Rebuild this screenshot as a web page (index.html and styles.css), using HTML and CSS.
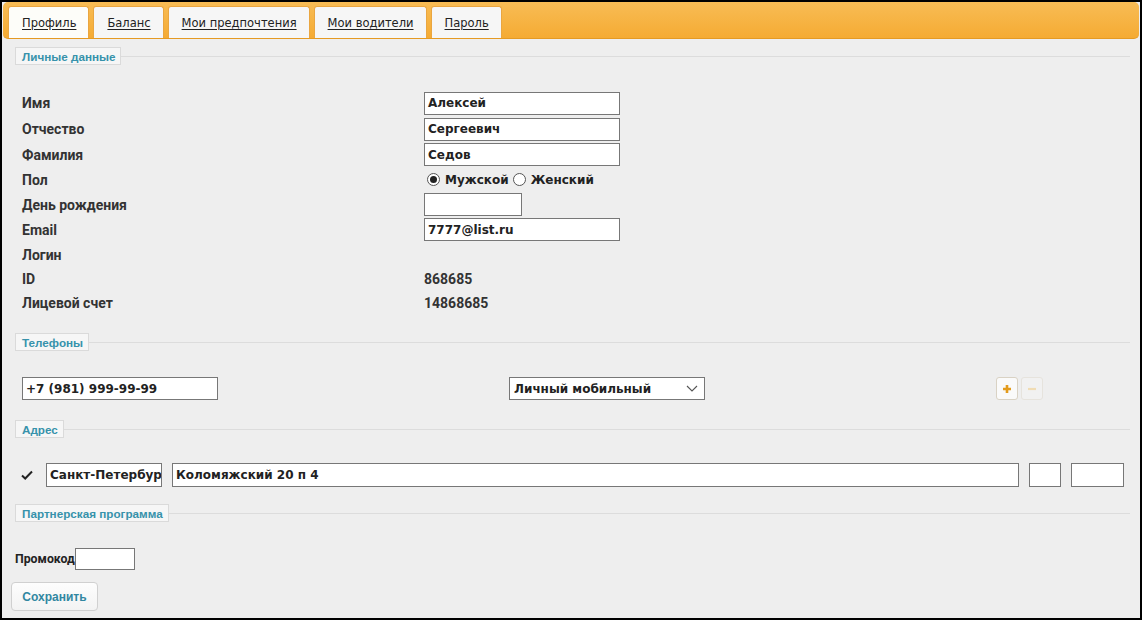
FILE: index.html
```html
<!DOCTYPE html>
<html lang="ru">
<head>
<meta charset="utf-8">
<title>Профиль</title>
<link rel="stylesheet" href="styles.css">
</head>
<body>
<div class="frame">
  <div class="tabsbar">
    <a class="tab active">Профиль</a>
    <a class="tab">Баланс</a>
    <a class="tab">Мои предпочтения</a>
    <a class="tab">Мои водители</a>
    <a class="tab">Пароль</a>
  </div>
  <div class="content">
    <div class="section-title first"><span class="legend">Личные данные</span><span class="rule"></span></div>
    <div class="fields">
      <div class="row r26"><span class="label">Имя</span><span class="input w196">Алексей</span></div>
      <div class="row r26"><span class="label">Отчество</span><span class="input w196">Сергеевич</span></div>
      <div class="row r25"><span class="label">Фамилия</span><span class="input w196">Седов</span></div>
      <div class="row r25"><span class="label">Пол</span>
        <span class="radios">
          <span class="radio checked"></span><span class="rlabel">Мужской</span>
          <span class="radio"></span><span class="rlabel">Женский</span>
        </span>
      </div>
      <div class="row r25"><span class="label">День рождения</span><span class="input w98"></span></div>
      <div class="row r25"><span class="label">Email</span><span class="input w196">7777@list.ru</span></div>
      <div class="row r25"><span class="label">Логин</span><span class="value"></span></div>
      <div class="row r24"><span class="label">ID</span><span class="value">868685</span></div>
      <div class="row r23"><span class="label">Лицевой счет</span><span class="value">14868685</span></div>
    </div>
    <div class="section-title s2"><span class="legend">Телефоны</span><span class="rule"></span></div>
    <div class="phone-row">
      <span class="input w196">+7 (981) 999-99-99</span>
      <span class="select">Личный мобильный
        <svg class="chev" width="12" height="7" viewBox="0 0 12 7"><path d="M1 1 L6 6 L11 1" fill="none" stroke="#555" stroke-width="1.1"/></svg>
      </span>
      <span class="pm">
        <span class="pmbtn plus"><svg width="10" height="10" viewBox="0 0 10 10"><path d="M5 1 V9 M1 5 H9" stroke="#e39b1c" stroke-width="2.6"/></svg></span>
        <span class="pmbtn minus"><svg width="10" height="10" viewBox="0 0 10 10"><path d="M1 5 H9" stroke="#f0dcb4" stroke-width="2.2"/></svg></span>
      </span>
    </div>
    <div class="section-title"><span class="legend">Адрес</span><span class="rule"></span></div>
    <div class="addr-row">
      <svg class="check" width="12" height="10" viewBox="0 0 12 10"><path d="M1 5.5 L4.2 8.5 L11 1.5" fill="none" stroke="#222" stroke-width="2"/></svg>
      <span class="input city">Санкт-Петербур</span>
      <span class="input street">Коломяжский 20 п 4</span>
      <span class="input house"></span>
      <span class="input flat"></span>
    </div>
    <div class="section-title s4"><span class="legend">Партнерская программа</span><span class="rule"></span></div>
    <div class="promo-row"><span class="plabel">Промокод</span><span class="input promo"></span></div>
    <div class="save-row"><span class="btn">Сохранить</span></div>
  </div>
</div>
</body>
</html>
```

FILE: styles.css
```css
* { box-sizing: border-box; }
html, body { margin: 0; padding: 0; }
body { width: 1142px; height: 620px; background: #000; font-family: "DejaVu Sans", Verdana, sans-serif; }

.frame {
  width: 1142px;
  height: 620px;
  border: 2px solid #000;
  background: #eeeeee;
  display: flex;
  flex-direction: column;
}

.tabsbar {
  margin: 0 1px;
  height: 37px;
  background: linear-gradient(#f8bc55, #f5ab33);
  border-radius: 5px;
  border-bottom: 1px solid #e59a23;
  display: flex;
  align-items: flex-end;
  padding-left: 5px;
  gap: 4px;
}

.tab {
  height: 32px;
  background: #f6f6f6;
  border: 1px solid #eaa640;
  border-bottom: none;
  border-radius: 3px 3px 0 0;
  padding: 0 12px 0 13px;
  display: flex;
  align-items: center;
  font-size: 11.5px;
  color: #222;
  text-decoration: underline;
  text-underline-offset: 2px;
}
.tab.active { background: #fdfdf9; }

.content {
  padding: 8px 10px 0 9px;
  display: flex;
  flex-direction: column;
}

.section-title {
  display: flex;
  align-items: center;
  margin-left: 4px;
  margin-top: 20px;
}
.section-title.first { margin-top: 0; }
.section-title.s2 { margin-top: 19px; }
.section-title.s4 { margin-top: 17px; }
.legend {
  height: 18px;
  border: 1px solid #dadada;
  background: #f6f6f6;
  padding: 0 5px 0 6px;
  font-family: "Liberation Sans", Arial, sans-serif;
  font-size: 11.7px;
  font-weight: bold;
  color: #3792ab;
  display: flex;
  align-items: center;
}
.rule { flex: 1; height: 1px; background: #dcdcdc; }

.fields {
  margin-top: 25px;
  padding-left: 11px;
  display: flex;
  flex-direction: column;
}
.row { display: flex; align-items: center; }
.r26 { height: 26px; }
.r25 { height: 25px; }
.r24 { height: 24px; }
.r23 { height: 23px; }
.label {
  width: 402px;
  font-family: Roboto, "Liberation Sans", sans-serif;
  font-weight: bold;
  font-size: 14px;
  color: #333;
}
.value {
  font-family: Roboto, "Liberation Sans", sans-serif;
  font-weight: bold;
  font-size: 14px;
  color: #333;
}

.input {
  height: 23px;
  background: #fff;
  border: 1px solid #777;
  font-size: 12px;
  font-weight: bold;
  color: #222;
  padding: 0 3px;
  display: flex;
  align-items: center;
  white-space: nowrap;
  overflow: hidden;
}
.w196 { width: 196px; }
.w98 { width: 98px; }

.radios { display: flex; align-items: center; font-size: 12px; font-weight: bold; color: #222; padding-left: 3px; }
.radio {
  width: 13px; height: 13px; border-radius: 50%;
  border: 1px solid #555; background: #fff;
  display: inline-flex; align-items: center; justify-content: center;
  margin-right: 5px;
}
.radio.checked::after { content: ""; width: 7px; height: 7px; border-radius: 50%; background: #222; }
.rlabel { margin-right: 4px; }

.phone-row {
  margin-top: 26px;
  padding-left: 11px;
  display: flex;
  align-items: center;
  height: 23px;
}
.select {
  margin-left: 291px;
  width: 196px;
  height: 23px;
  background: #fff;
  border: 1px solid #777;
  font-size: 12px;
  font-weight: bold;
  color: #222;
  padding: 0 4px;
  display: flex;
  align-items: center;
  justify-content: space-between;
}
.chev { margin-right: 2px; }
.pm { margin-left: 291px; display: flex; gap: 3px; }
.pmbtn {
  width: 22px; height: 23px;
  border: 1px solid #d9d2c4;
  border-radius: 3px;
  background: #fafafa;
  display: flex; align-items: center; justify-content: center;
}
.pmbtn.minus { border-color: #e6e3dd; background: #f1f1f1; }

.addr-row {
  margin-top: 25px;
  padding-left: 10px;
  display: flex;
  align-items: center;
  height: 24px;
}
.addr-row .input { height: 24px; }
.check { margin-right: 13px; }
.city { width: 116px; }
.street { margin-left: 10px; width: 847px; }
.house { margin-left: 10px; width: 32px; }
.flat { margin-left: 10px; width: 53px; }

.promo-row {
  margin-top: 26px;
  margin-left: 4px;
  display: flex;
  align-items: center;
}
.plabel {
  font-family: Roboto, "Liberation Sans", sans-serif;
  font-size: 12.3px;
  font-weight: bold;
  color: #222;
}
.promo { width: 60px; height: 22px; }

.save-row { margin-top: 12px; display: flex; }
.btn {
  width: 87px; height: 29px;
  border: 1px solid #d0d0d0;
  border-radius: 4px;
  background: linear-gradient(#fdfdfd, #f3f3f3);
  font-family: "Liberation Sans", Arial, sans-serif;
  font-size: 12px;
  font-weight: bold;
  color: #3187a1;
  display: flex; align-items: center; justify-content: center;
}
```
